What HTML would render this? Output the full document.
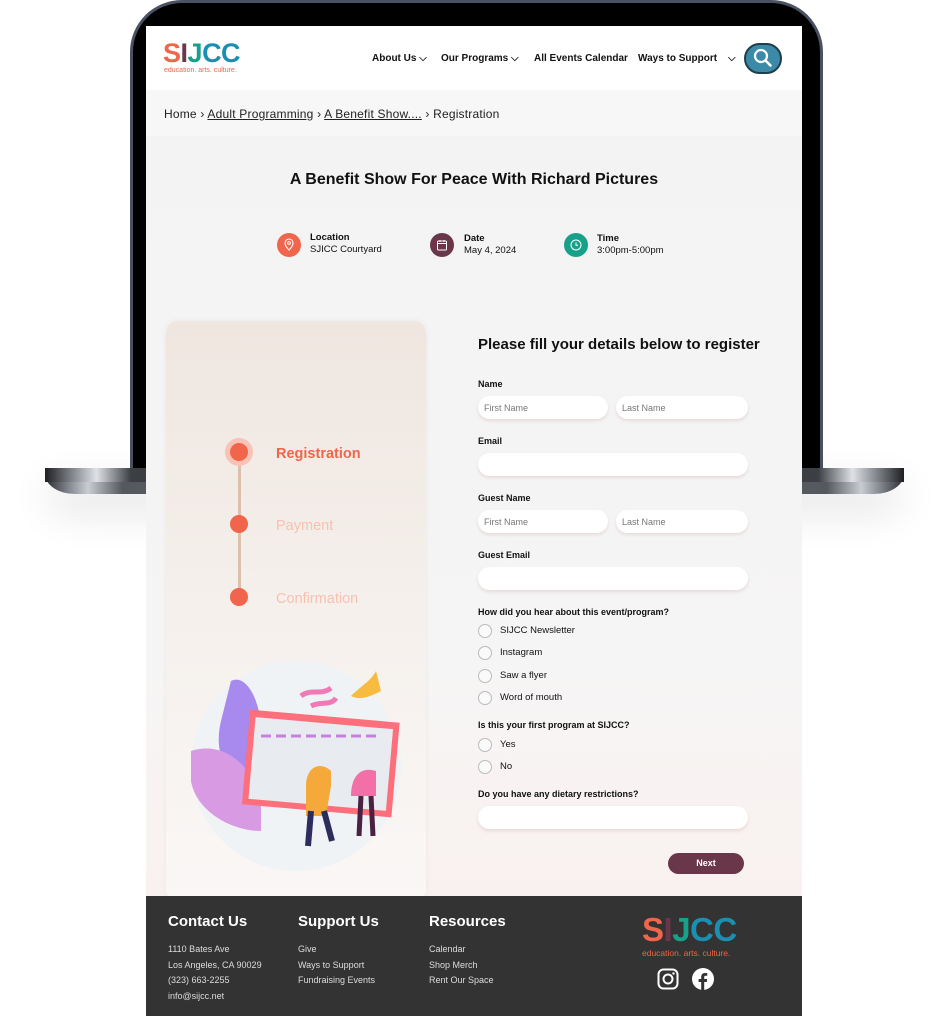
<!DOCTYPE html>
<html><head><meta charset="utf-8"><style>
*{box-sizing:border-box;margin:0;padding:0}
body{width:948px;height:1016px;background:#fff;position:relative;overflow:hidden;font-family:"Liberation Sans",sans-serif;color:#111}
.lid{position:absolute;left:130px;top:0;width:693px;height:472px;background:#000;border:3px solid #4a5162;border-bottom:none;border-radius:52px 52px 0 0}
.base{position:absolute;left:45px;top:468px;width:859px;height:26px;border-radius:0 0 30px 30px/0 0 20px 20px;background:linear-gradient(90deg,#2a2c30 0%,#8a8e96 3%,#c9ccd2 5%,#55585e 9%,#6b6e74 50%,#55585e 91%,#c9ccd2 95%,#8a8e96 97%,#2a2c30 100%);box-shadow:0 18px 40px rgba(0,0,0,.12)}
.base:before{content:"";position:absolute;left:0;right:0;top:0;height:14px;background:linear-gradient(90deg,#1d1f22,#9da0a6 4%,#dfe1e5 6%,#3c3f44 10%,#2c2e32 50%,#3c3f44 90%,#dfe1e5 94%,#9da0a6 96%,#1d1f22)}
.page{position:absolute;left:146px;top:26px;width:656px;height:990px;background:#f3f3f3;overflow:hidden}
.hdr{height:64px;background:#fff;position:relative}
.logo{position:absolute;font-weight:900;letter-spacing:-0.5px}
.nav{position:absolute;top:27px;font-size:10px;font-weight:bold;color:#111}
.search{position:absolute;left:598px;top:17px;width:38px;height:31px;border-radius:16px;background:#3b8aa8;border:2px solid #1f3e4d}
.bc{height:46px;background:#f7f7f7;font-size:12px;color:#222;padding:17px 0 0 18px;letter-spacing:.2px}
.main{position:absolute;top:110px;left:0;width:656px;height:760px;background:linear-gradient(#f3f3f3 0%,#f6f5f5 70%,#f9f1ef 100%)}
h1{position:absolute;top:35px;width:100%;text-align:center;font-size:16px;font-weight:bold}
.ic{position:absolute;width:24px;height:24px;border-radius:50%}
.il{position:absolute;font-size:9.5px;line-height:12px}
.il b{display:block}
.card{position:absolute;left:20px;top:185px;width:260px;height:580px;border-radius:12px;background:linear-gradient(#efe6e0 0%,#f5f0ec 50%,#faf7f6 100%);box-shadow:0 0 6px rgba(0,0,0,.05)}
.dot{position:absolute;left:64px;width:18px;height:18px;border-radius:50%;background:#f0654b}
.st{position:absolute;left:110px;font-size:14.5px}
.form{position:absolute;left:332px;top:0}
.lb{position:absolute;font-size:9px;font-weight:bold;white-space:nowrap}
.in{position:absolute;height:23px;border-radius:12px;background:#fff;box-shadow:0 2px 3px rgba(200,160,160,.3);font-size:9px;color:#777;padding:7px 0 0 6px}
.rd{position:absolute;font-size:9.5px;white-space:nowrap;padding-left:22px}
.rd:before{content:"";position:absolute;left:0;top:-1px;width:12px;height:12px;border-radius:50%;border:1px solid #bbb;background:#fafafa}
.ft{position:absolute;top:870px;left:0;width:656px;height:120px;background:#333;color:#fff}
.ft h3{position:absolute;top:17px;font-size:15px}
.ft p{position:absolute;font-size:9px;line-height:15.5px;color:#ddd}
</style></head><body>
<div class="lid"></div>
<div class="base"></div>
<div class="page">
 <div class="hdr">
  <div class="logo" style="left:17px;top:14px;font-size:27px;line-height:26px"><span style="color:#f0654b">S</span><span style="color:#6a3649">I</span><span style="color:#17a08a">J</span><span style="color:#1b8fb0">CC</span></div>
  <div style="position:absolute;left:18px;top:41px;font-size:7px;color:#f0654b">education. arts. culture.</div>
  <div class="nav" style="left:226px">About Us ⌵</div>
  <div class="nav" style="left:295px">Our Programs ⌵</div>
  <div class="nav" style="left:388px">All Events Calendar</div>
  <div class="nav" style="left:492px">Ways to Support</div>
  <div class="nav" style="left:582px">⌵</div>
  <div class="search"><svg width="34" height="27" viewBox="0 0 34 27"><circle cx="15" cy="11" r="6" fill="none" stroke="#fff" stroke-width="2.2"/><path d="M19.5 15.5l5 5" stroke="#fff" stroke-width="2.6" stroke-linecap="round"/></svg></div>
 </div>
 <div class="bc">Home › <u>Adult Programming</u> › <u>A Benefit Show....</u> › Registration</div>
 <div class="main">
  <h1>A Benefit Show For Peace With Richard Pictures</h1>
  <div class="ic" style="left:131px;top:97px;background:#f0654b"><svg width="24" height="24"><path d="M12 6a4 4 0 0 1 4 4c0 3-4 7-4 7s-4-4-4-7a4 4 0 0 1 4-4z" fill="none" stroke="#fff" stroke-width="1.1"/><circle cx="12" cy="10" r="1.4" fill="none" stroke="#fff"/></svg></div>
  <div class="il" style="left:164px;top:96px"><b>Location</b>SJICC Courtyard</div>
  <div class="ic" style="left:284px;top:97px;background:#6a3649"><svg width="24" height="24"><rect x="7.5" y="8" width="9" height="9" rx="1" fill="none" stroke="#fff"/><path d="M7.5 10.5h9M10 7v2M14 7v2" stroke="#fff"/></svg></div>
  <div class="il" style="left:318px;top:97px"><b>Date</b>May 4, 2024</div>
  <div class="ic" style="left:418px;top:97px;background:#17a08a"><svg width="24" height="24"><circle cx="12" cy="12" r="5" fill="none" stroke="#fff"/><path d="M12 9.5v2.7h2" stroke="#fff" fill="none"/></svg></div>
  <div class="il" style="left:451px;top:97px"><b>Time</b>3:00pm-5:00pm</div>
  <div class="card">
   <div style="position:absolute;left:72px;top:132px;width:3px;height:146px;background:#dcc0ad"></div>
   <div style="position:absolute;left:59px;top:117px;width:28px;height:28px;border-radius:50%;background:#f8c3b6"></div>
   <div class="dot" style="top:122px"></div>
   <div class="dot" style="top:194px"></div>
   <div class="dot" style="top:267px"></div>
   <div class="st" style="top:125px;color:#f0654b;font-weight:bold">Registration</div>
   <div class="st" style="top:197px;color:#f7c0b3">Payment</div>
   <div class="st" style="top:270px;color:#f7c0b3">Confirmation</div>
   <svg style="position:absolute;left:20px;top:340px" width="220" height="215" viewBox="0 0 220 215">
    <circle cx="110" cy="105" r="105" fill="#f0f3f6"/>
    <path d="M45 20c15-8 30 20 30 50l-5 70c-20-10-45-40-35-80z" fill="#a889ee"/>
    <path d="M5 90c30-10 60 10 70 50v30c-30 0-65-20-70-50z" fill="#d79ae3"/>
    <rect x="60" y="55" width="150" height="95" fill="#fd6f7b" transform="rotate(5 135 100)"/>
    <rect x="66" y="62" width="138" height="82" fill="#e8ebf0" transform="rotate(5 135 100)"/>
    <path d="M75 75h120" stroke="#c77fe0" stroke-width="3" stroke-dasharray="10 5"/>
    <path d="M145 110c-10-10-25-5-25 15v30h20l5-30z" fill="#f4a93a"/>
    <path d="M125 150l-3 35M138 150l8 30" stroke="#2c2d5c" stroke-width="6"/>
    <path d="M190 110c-15-5-25 5-25 25h25z" fill="#f36fa7"/>
    <path d="M175 135l-2 40M185 135l2 40" stroke="#4a2140" stroke-width="5"/>
    <path d="M165 35c10-10 20-15 25-25l5 20c-10 5-20 10-30 5z" fill="#f7bb3f"/>
    <path d="M115 35c10-8 20 0 30-8M125 45c10-5 20 0 25-8" stroke="#f07ab5" stroke-width="5" fill="none"/>
   </svg>
  </div>
  <div class="form">
   <div style="position:absolute;top:200px;font-size:15px;font-weight:bold;white-space:nowrap">Please fill your details below to register</div>
   <div class="lb" style="top:243px">Name</div>
   <div class="in" style="top:260px;width:130px">First Name</div>
   <div class="in" style="left:138px;top:260px;width:132px">Last Name</div>
   <div class="lb" style="top:300px">Email</div>
   <div class="in" style="top:317px;width:270px"></div>
   <div class="lb" style="top:357px">Guest Name</div>
   <div class="in" style="top:374px;width:130px">First Name</div>
   <div class="in" style="left:138px;top:374px;width:132px">Last Name</div>
   <div class="lb" style="top:414px">Guest Email</div>
   <div class="in" style="top:431px;width:270px"></div>
   <div class="lb" style="top:471px">How did you hear about this event/program?</div>
   <div class="rd" style="top:489px">SIJCC Newsletter</div>
   <div class="rd" style="top:511px">Instagram</div>
   <div class="rd" style="top:534px">Saw a flyer</div>
   <div class="rd" style="top:556px">Word of mouth</div>
   <div class="lb" style="top:584px">Is this your first program at SIJCC?</div>
   <div class="rd" style="top:603px">Yes</div>
   <div class="rd" style="top:625px">No</div>
   <div class="lb" style="top:653px">Do you have any dietary restrictions?</div>
   <div class="in" style="top:670px;width:270px"></div>
   <div style="position:absolute;left:190px;top:717px;width:76px;height:21px;border-radius:11px;background:#6a3649;color:#fff;font-size:9px;font-weight:bold;text-align:center;line-height:21px">Next</div>
  </div>
 </div>
 <div class="ft">
  <h3 style="left:22px">Contact Us</h3>
  <h3 style="left:152px">Support Us</h3>
  <h3 style="left:283px">Resources</h3>
  <p style="left:22px;top:46px">1110 Bates Ave<br>Los Angeles, CA 90029<br>(323) 663-2255<br>info@sijcc.net</p>
  <p style="left:152px;top:46px">Give<br>Ways to Support<br>Fundraising Events</p>
  <p style="left:283px;top:46px">Calendar<br>Shop Merch<br>Rent Our Space</p>
  <div class="logo" style="left:496px;top:18px;font-size:33px;line-height:32px"><span style="color:#f0654b">S</span><span style="color:#6a3649">I</span><span style="color:#17a08a">J</span><span style="color:#1b8fb0">CC</span></div>
  <div style="position:absolute;left:496px;top:52px;font-size:8.5px;color:#f0654b">education. arts. culture.</div>
  <svg style="position:absolute;left:511px;top:72px" width="22" height="22" viewBox="0 0 22 22"><rect x="1.5" y="1.5" width="19" height="19" rx="5" fill="none" stroke="#fff" stroke-width="2"/><circle cx="11" cy="11" r="4.5" fill="none" stroke="#fff" stroke-width="2"/><circle cx="16.5" cy="5.5" r="1.2" fill="#fff"/></svg>
  <svg style="position:absolute;left:546px;top:72px" width="22" height="22" viewBox="0 0 22 22"><circle cx="11" cy="11" r="11" fill="#fff"/><path d="M12.2 22v-8h2.6l.4-3h-3V9.2c0-.9.3-1.5 1.5-1.5h1.6V5.1c-.3 0-1.2-.1-2.3-.1-2.3 0-3.8 1.4-3.8 3.9V11H6.6v3h2.6v8z" fill="#333"/></svg>
 </div>
</div>
</body></html>
